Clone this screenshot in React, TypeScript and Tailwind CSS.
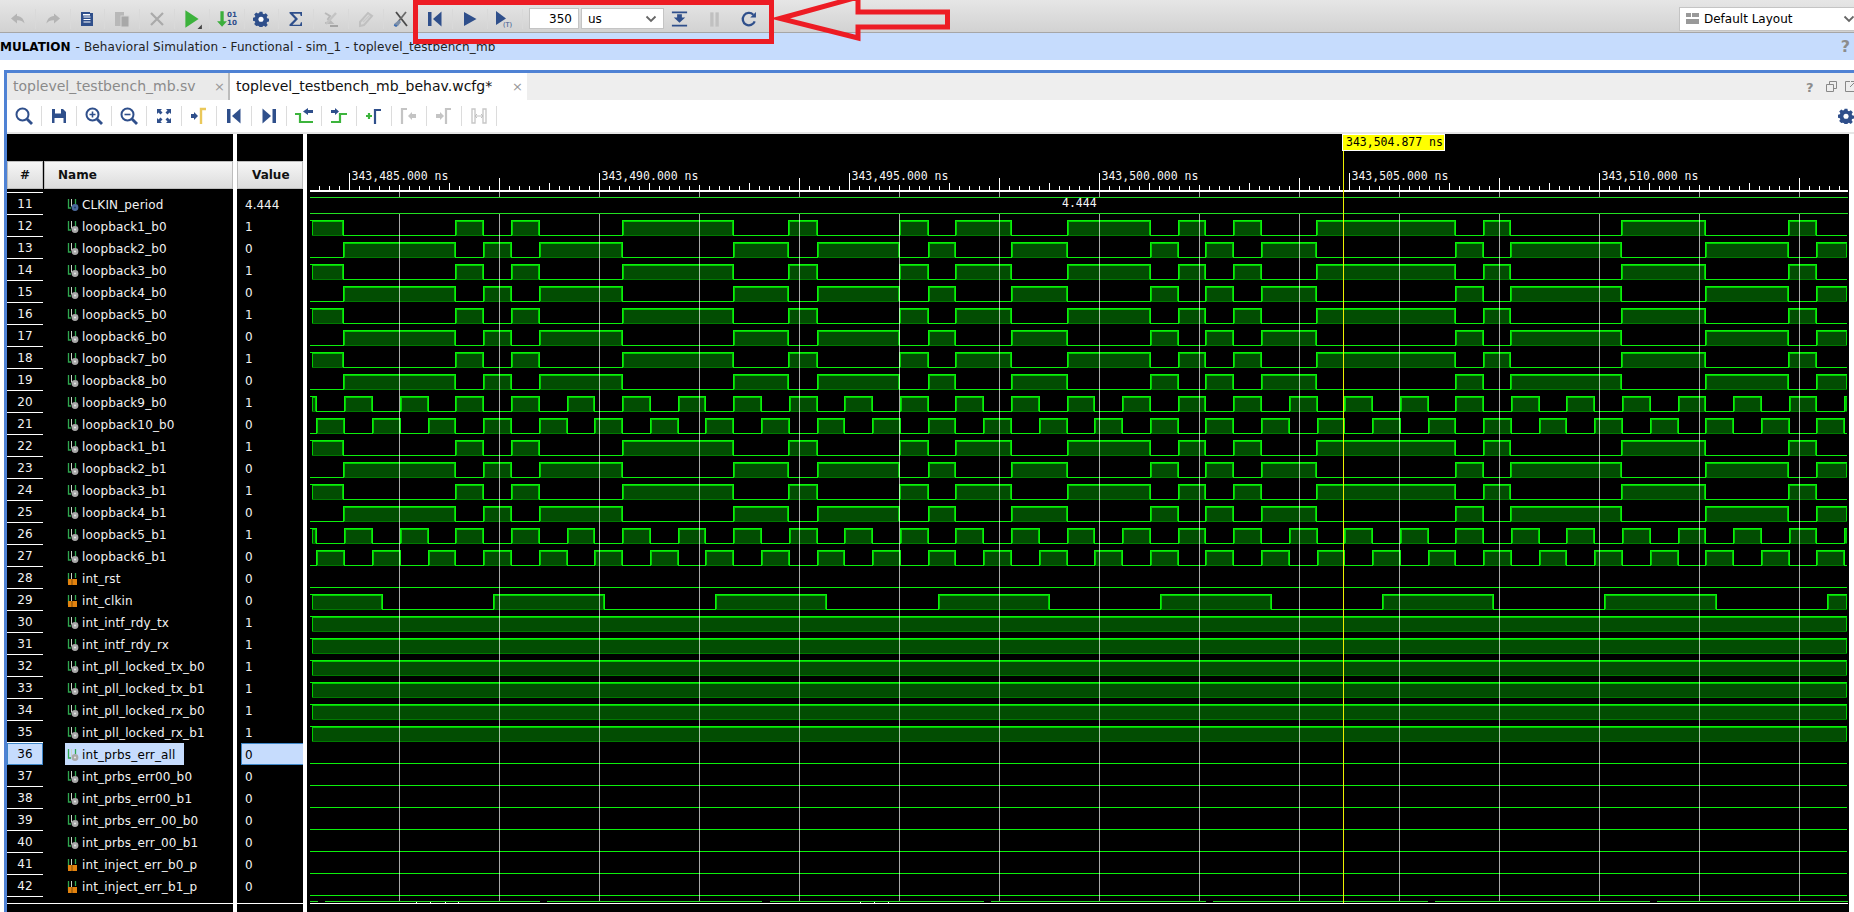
import React from "react";

const BLUE = "#2f4f8b";
const GREY = "#b4b4b4";

// rows of the wave window, in the order shown
type Kind = "gray" | "blue" | "orange";
interface Row {
  n: number;
  name: string;
  value: string;
  kind: Kind;
}

const row = (n: number, name: string, value: string, kind: Kind = "gray"): Row => ({ n, name, value, kind });

const rows: Row[] = [
  row(11, "CLKIN_period", "4.444", "blue"),
  row(12, "loopback1_b0", "1"),
  row(13, "loopback2_b0", "0"),
  row(14, "loopback3_b0", "1"),
  row(15, "loopback4_b0", "0"),
  row(16, "loopback5_b0", "1"),
  row(17, "loopback6_b0", "0"),
  row(18, "loopback7_b0", "1"),
  row(19, "loopback8_b0", "0"),
  row(20, "loopback9_b0", "1"),
  row(21, "loopback10_b0", "0"),
  row(22, "loopback1_b1", "1"),
  row(23, "loopback2_b1", "0"),
  row(24, "loopback3_b1", "1"),
  row(25, "loopback4_b1", "0"),
  row(26, "loopback5_b1", "1"),
  row(27, "loopback6_b1", "0"),
  row(28, "int_rst", "0", "orange"),
  row(29, "int_clkin", "0", "orange"),
  row(30, "int_intf_rdy_tx", "1"),
  row(31, "int_intf_rdy_rx", "1"),
  row(32, "int_pll_locked_tx_b0", "1"),
  row(33, "int_pll_locked_tx_b1", "1"),
  row(34, "int_pll_locked_rx_b0", "1"),
  row(35, "int_pll_locked_rx_b1", "1"),
  row(36, "int_prbs_err_all", "0"),
  row(37, "int_prbs_err00_b0", "0"),
  row(38, "int_prbs_err00_b1", "0"),
  row(39, "int_prbs_err_00_b0", "0"),
  row(40, "int_prbs_err_00_b1", "0"),
  row(41, "int_inject_err_b0_p", "0", "orange"),
  row(42, "int_inject_err_b1_p", "0", "orange"),
];

const X0 = 310;
const X1 = 1847;

const slow: number[][] = [
  [311, 343], [455, 483], [511, 539], [622, 733], [788, 817], [899, 928], [955, 1011], [1067, 1150],
  [1178, 1205], [1233, 1261], [1316, 1455], [1483, 1510], [1621, 1705], [1788, 1816],
];

const fastEdges = [
  316, 344, 372, 400, 428, 455, 483, 511, 539, 567, 594, 622, 650, 678, 705, 733, 761, 789, 817, 844, 872,
  900, 928, 955, 983, 1011, 1039, 1067, 1094, 1122, 1150, 1178, 1205, 1233, 1261, 1289, 1317, 1344, 1372,
  1400, 1428, 1455, 1483, 1511, 1539, 1566, 1594, 1622, 1650, 1678, 1705, 1733, 1761, 1789, 1816, 1844,
];

const fast: number[][] = [[311, 316]];
for (let i = 1; i < fastEdges.length; i += 2) {
  fast.push([fastEdges[i], fastEdges[i + 1] ?? X1]);
}

const invert = (highs: number[][]) => {
  const out: number[][] = [];
  let from = highs[0][0] <= 311 ? highs[0][1] : 311;
  for (const h of highs.slice(highs[0][0] <= 311 ? 1 : 0)) {
    out.push([from, h[0]]);
    from = h[1];
  }
  if (from < X1) out.push([from, X1]);
  return out;
};

const clkin = [
  [311, 382], [493, 604], [715, 826], [938, 1049], [1160, 1271], [1382, 1493], [1604, 1716], [1827, X1],
];

const waves: Record<number, number[][]> = {
  12: slow, 13: invert(slow), 14: slow, 15: invert(slow), 16: slow, 17: invert(slow), 18: slow, 19: invert(slow),
  20: fast, 21: invert(fast),
  22: slow, 23: invert(slow), 24: slow, 25: invert(slow),
  26: fast, 27: invert(fast),
  29: clkin,
  30: [[311, X1]], 31: [[311, X1]], 32: [[311, X1]], 33: [[311, X1]], 34: [[311, X1]], 35: [[311, X1]],
};

function Wave({ top, highs }: { top: number; highs: number[][] }) {
  const yH = top + 6.5;
  const yL = top + 21.5;
  let d = `M${X0} ${highs[0]?.[0] === 311 ? yH : yL}`;
  highs.forEach(([a, b]) => {
    if (a !== 311) d += `H${a + 0.5}V${yH}`;
    else d += `H${a + 0.5}`;
    if (b < X1) d += `H${b + 0.5}V${yL}`;
    else d += `H${X1}`;
  });
  if (!highs.length || highs[highs.length - 1][1] < X1) d += `H${X1}`;
  return (
    <g shapeRendering="crispEdges">
      {highs.map(([a, b]) => (
        <g key={a}>
          <rect x={a + 1.5} y={yH + 1} width={b - a - 2} height={14} fill="#024d02" stroke="#00cc00" strokeWidth={1} />
          <path d={`M${a + 1} ${yL}H${b}`} stroke="#007a00" />
        </g>
      ))}
      <path d={d} fill="none" stroke="#0cf00c" strokeWidth={1} />
    </g>
  );
}

const LABELS = [
  [349.5, "343,485.000 ns"],
  [599.5, "343,490.000 ns"],
  [849.5, "343,495.000 ns"],
  [1099.5, "343,500.000 ns"],
  [1349.5, "343,505.000 ns"],
  [1599.5, "343,510.000 ns"],
] as const;

const TALL = [499.5, 799.5, 999.5, 1299.5, 1499.5, 1799.5];

function WaveView() {
  const ticks: number[] = [];
  for (let x = 319.5; x < 1845; x += 10) ticks.push(x);
  const grid: number[] = [];
  for (let x = 399.5; x < 1845; x += 100) grid.push(x);
  const mono = { fontFamily: "'DejaVu Sans Mono', monospace", fontSize: 11.5 };

  return (
    <svg viewBox="307 134 1542 778" className="block w-[1542px] h-[778px]">
      {LABELS.map(([x, t]) => (
        <text key={x} x={x + 2} y={180} fill="#f4f4f4" style={mono}>
          {t}
        </text>
      ))}
      <g shapeRendering="crispEdges" stroke="#ffffff">
        {ticks.map((x) => {
          const isLabel = (x - 349.5) % 250 === 0;
          const h = isLabel ? 17 : TALL.includes(x) ? 12 : (x - 349.5) % 100 === 0 ? 7 : (x - 349.5) % 50 === 0 ? 5 : 4;
          return <path key={x} d={`M${x} ${190 - h}V190`} />;
        })}
        <path d={`M310 190.5H1848M310 191.5H1848`} />
      </g>
      {rows
        .filter((r) => r.n >= 12)
        .map((r) => (
          <Wave key={r.n} top={192 + 22 * (r.n - 11)} highs={waves[r.n] ?? []} />
        ))}
      <g shapeRendering="crispEdges" stroke="#ffffff" strokeOpacity={0.66}>
        {grid.map((x) => (
          <path key={x} d={`M${x} 192V197M${x} 214V901`} />
        ))}
      </g>
      <g shapeRendering="crispEdges" stroke="#22e022">
        <path d="M310 197.5H1848M310 213.5H1848" />
        <path d="M310 901.5H318M325 901.5H540M547 901.5H762M770 901.5H984M991 901.5H1206M1213 901.5H1428M1435 901.5H1650M1657 901.5H1848" />
      </g>
      <text x={1062} y={207} fill="#f4f4f4" style={mono}>
        4.444
      </text>
      <g shapeRendering="crispEdges">
        <path d="M310 903.5H1848" stroke="#ffffff" />
        <path d="M416.5 902V903M430.5 902V903M445.5 902V903M458.5 902V903M860.5 902V903M874.5 902V903M888.5 902V903" stroke="#ffffff" />
        <path d="M1343.5 150V903" stroke="#eeee00" />
      </g>
    </svg>
  );
}

// signal type glyph in front of each name
function SignalIcon({ kind }: { kind: Kind }) {
  return (
    <svg width="12" height="14" viewBox="0 0 12 14" className="shrink-0">
      <path d="M1.500 1V10H4M8.500 1V6" fill="none" stroke="#2fa84f" strokeWidth="1.300" />
      <path d="M4.500 1V8.500" stroke="#c8d8c8" strokeWidth="1" />
      {kind === "orange" ? (
        <>
          <rect x="1" y="7" width="9" height="6" fill="#e2820f" />
          <path d="M5 7V13" stroke="#7a4a08" strokeWidth="1" />
        </>
      ) : (
        <>
          <circle cx="8" cy="9.500" r="3.400" fill={kind === "blue" ? "#4c6a9c" : "#a9a9a9"} />
          <circle cx="8" cy="9.500" r="1.100" fill={kind === "blue" ? "#24406f" : "#e4e4e4"} />
        </>
      )}
    </svg>
  );
}

function Header({ children, className }: { children: React.ReactNode; className: string }) {
  return (
    <div className={`h-[28px] flex items-center bg-gradient-to-b from-[#f6f6f6] to-[#dcdcdc] border border-[#bdbdbd] font-bold text-[#111] ${className}`}>
      {children}
    </div>
  );
}

// toolbar glyphs ---------------------------------------------------------
const Svg = ({ children, s = 20 }: { children: React.ReactNode; s?: number }) => (
  <svg width={s} height={s} viewBox="0 0 20 20">
    {children}
  </svg>
);

const Undo = () => (
  <Svg>
    <path d="M9 4.500 3 9.500l6 5v-3.200c3-.2 5.500.5 7.500 3.200-.4-4.200-3-7.200-7.500-7.600z" fill={GREY} />
  </Svg>
);
const Redo = () => (
  <Svg>
    <path d="M11 4.500 17 9.500l-6 5v-3.200c-3-.2-5.500.5-7.500 3.200.4-4.200 3-7.200 7.500-7.600z" fill={GREY} />
  </Svg>
);
const Doc = () => (
  <Svg>
    <path d="M4 3h9v1h3v13H4z" fill={BLUE} />
    <path d="M6.500 8h7M6.500 10.500h7M6.500 13h7" stroke="#fff" strokeWidth="1" />
    <rect x="6" y="5" width="7" height="1.500" fill="#fff" />
  </Svg>
);
const Copy = () => (
  <Svg>
    <rect x="3" y="3" width="9" height="14" fill="#b8b8b8" />
    <rect x="9" y="7" width="8" height="11" fill="#a8a8a8" stroke="#d4d4d4" />
  </Svg>
);
const Cross = () => (
  <Svg>
    <path d="M4 4 16 16M16 4 4 16" stroke="#aaa" strokeWidth="2.200" />
  </Svg>
);
const GreenPlay = () => (
  <Svg s={22}>
    <path d="M4 2 16 10 4 18z" fill="#3cb23c" />
    <path d="M19 15v4h-4z" fill="#444" />
  </Svg>
);
const Bits = () => (
  <Svg s={22}>
    <path d="M4 3h3v9h3l-4.500 5L1 12h3z" fill="#3cae3c" />
    <text x="10" y="8" fontSize="6.500" fontWeight="700" fill={BLUE} fontFamily="'DejaVu Sans', sans-serif">
      01
    </text>
    <text x="10" y="15" fontSize="6.500" fontWeight="700" fill={BLUE} fontFamily="'DejaVu Sans', sans-serif">
      10
    </text>
  </Svg>
);
const Gear = ({ color = BLUE, s = 16 }: { color?: string; s?: number }) => (
  <svg width={s} height={s} viewBox="0 0 20 20">
    <path
      d="M8.200 1h3.600l.5 2.500 1.500.7 2.200-1.400 2.500 2.500-1.400 2.200.6 1.500 2.300.6v3.600l-2.400.5-.6 1.500 1.400 2.200-2.500 2.500-2.200-1.400-1.500.6-.5 2.400H8.200l-.5-2.400-1.500-.6L4 18.900l-2.500-2.500 1.400-2.200-.6-1.500L0 12.100V8.500l2.300-.6.600-1.500L1.500 4.300 4 1.800l2.200 1.400 1.500-.7z"
      fill={color}
    />
    <circle cx="10" cy="10.300" r="3.200" fill="#fff" />
  </svg>
);
const Sigma = () => (
  <Svg>
    <path d="M3.500 3h12.500v4h-1.300l-.6-2.300H7l5 5.300-5.500 5.700h7.500l.9-2.500H16L16 17H3.500v-1.400L9 10 3.500 4.300z" fill={BLUE} />
  </Svg>
);
const GreySigma = () => (
  <Svg>
    <path d="M4 4l5 3-2 3 4 4H4" fill="none" stroke="#b8b8b8" strokeWidth="2" />
    <path d="M5 15 15 4" stroke="#c4c4c4" strokeWidth="2.400" />
    <path d="M9 17h8" stroke="#a4a4a4" strokeWidth="2" />
  </Svg>
);
const GreyPen = () => (
  <Svg>
    <path d="M4 13 12 4l4 3-8 9-4 1z" fill="none" stroke="#c0c0c0" strokeWidth="2" />
    <path d="M7 13l7-7" stroke="#c8c8c8" strokeWidth="1.500" />
  </Svg>
);
const CutProbe = () => (
  <Svg>
    <path d="M5 3 16 17" stroke="#4a4a4a" strokeWidth="1.800" />
    <path d="M15 3 7 13" stroke="#6a6a6a" strokeWidth="1.800" />
    <path d="M8 11 3 15l1 3 3-1 3-4z" fill="#7d8fa8" />
    <path d="M3 16l3 1" stroke="#3f6fb5" strokeWidth="1.500" />
  </Svg>
);
const SkipBack = ({ s = 20, color = BLUE }: { s?: number; color?: string }) => (
  <Svg s={s}>
    <rect x="3" y="3" width="3.500" height="14" fill={color} />
    <path d="M16.500 2.500V17.500L8 10z" fill={color} />
  </Svg>
);
const SkipNext = () => (
  <Svg>
    <rect x="13.500" y="3" width="3.500" height="14" fill={BLUE} />
    <path d="M3.500 2.500V17.500L12 10z" fill={BLUE} />
  </Svg>
);
const Play = () => (
  <Svg>
    <path d="M4 3 16.500 10 4 17z" fill={BLUE} />
  </Svg>
);
const PlayT = () => (
  <svg width="20" height="20" viewBox="0 0 20 20">
    <path d="M1 2 11 9.500 1 16z" fill={BLUE} />
    <text x="8" y="18" fontSize="6.500" fill={BLUE} fontFamily="'DejaVu Sans', sans-serif">
      (T)
    </text>
  </svg>
);
const StepIn = () => (
  <Svg>
    <path d="M2 3h16M2 17h16" stroke={BLUE} strokeWidth="1.800" />
    <path d="M7.500 5h5v3.500H16L10 14 4 8.500h3.500z" fill={BLUE} />
  </Svg>
);
const Pause = () => (
  <Svg>
    <rect x="5.500" y="3" width="3.500" height="15" fill="#c0c0c0" />
    <rect x="11" y="3" width="3.500" height="15" fill="#c0c0c0" />
  </Svg>
);
const Reload = () => (
  <Svg>
    <path d="M15.500 12.500a6.500 6.500 0 1 1-1.500-7" fill="none" stroke={BLUE} strokeWidth="2.400" />
    <path d="M16.800 2.500v6h-6z" fill={BLUE} />
  </Svg>
);
const Search = () => (
  <Svg>
    <circle cx="8.500" cy="8.500" r="6" fill="none" stroke={BLUE} strokeWidth="2" />
    <path d="M13 13l5 5" stroke={BLUE} strokeWidth="2.800" />
  </Svg>
);
const Save = () => (
  <Svg>
    <path d="M3 3h11l3 3v11H3z" fill={BLUE} />
    <rect x="6" y="3" width="6" height="4.500" fill="#fff" />
    <rect x="5.500" y="12" width="9" height="5" fill="#fff" />
  </Svg>
);
const ZoomGlyph = ({ plus }: { plus: boolean }) => (
  <Svg>
    <circle cx="8.500" cy="8.500" r="6" fill="none" stroke={BLUE} strokeWidth="2" />
    <path d={plus ? "M5.500 8.500h6M8.500 5.500v6" : "M5.500 8.500h6"} stroke={BLUE} strokeWidth="1.600" />
    <path d="M13 13l5 5" stroke={BLUE} strokeWidth="2.800" />
  </Svg>
);
const Fit = () => (
  <Svg>
    <path d="M3 3h5L6.500 4.500 8.500 6.500 6.500 8.500 4.500 6.500 3 8zM17 3v5l-1.500-1.500-2 2-2-2 2-2L12 3zM3 17v-5l1.500 1.500 2-2 2 2-2 2L8 17zM17 17h-5l1.500-1.500-2-2 2-2 2 2L17 12z" fill={BLUE} />
  </Svg>
);
const GotoCursor = () => (
  <Svg>
    <path d="M2 8h3V6l4 4-4 4v-2H2z" fill={BLUE} />
    <path d="M12 18V3h5" fill="none" stroke="#eac85a" strokeWidth="2.400" />
  </Svg>
);
const Edge = ({ flip }: { flip?: boolean }) => (
  <Svg>
    <path d={flip ? "M2 16h9V8h7" : "M1 8h5v8h13"} fill="none" stroke="#3cb43c" strokeWidth="2.200" />
    <path d={flip ? "M2 4h4V2l4 3.500L6 9V7H2z" : "M19 4h-5V2L9 5.500 14 9V7h5z"} fill={BLUE} />
  </Svg>
);
const AddMarker = () => (
  <Svg>
    <path d="M2 10h6M5 7v6" stroke="#3cb43c" strokeWidth="2.200" />
    <path d="M11 18V4h6" fill="none" stroke={BLUE} strokeWidth="2.200" />
  </Svg>
);
const MarkPrev = () => (
  <Svg>
    <path d="M3 18V3h5" fill="none" stroke="#c4c4c4" strokeWidth="2.200" />
    <path d="M17 8h-4V6l-4 4 4 4v-2h4z" fill="#c4c4c4" />
  </Svg>
);
const MarkNext = () => (
  <Svg>
    <path d="M2 8h4V6l4 4-4 4v-2H2z" fill="#c4c4c4" />
    <path d="M12 18V3h5" fill="none" stroke="#c4c4c4" strokeWidth="2.200" />
  </Svg>
);
const Span = () => (
  <Svg>
    <path d="M3 3h3v14H3zM14 3h3v14h-3z" fill="none" stroke="#c8c8c8" strokeWidth="1.400" />
    <path d="M6 10h8M6 10l2-2M6 10l2 2M14 10l-2-2M14 10l-2 2" stroke="#c0c0c0" strokeWidth="1" fill="none" />
  </Svg>
);
const Chevron = () => (
  <svg width="12" height="8" viewBox="0 0 12 8">
    <path d="M1.500 1.500 6 6l4.500-4.500" fill="none" stroke="#666" strokeWidth="1.800" />
  </svg>
);
const Help = ({ cls }: { cls: string }) => <span className={`font-bold text-[#8c8c8c] ${cls}`}>?</span>;

const topIcons = [
  <Undo />, <Redo />, <Doc />, <Copy />, <Cross />, <GreenPlay />, <Bits />, <Gear />, <Sigma />, <GreySigma />,
  <GreyPen />, <CutProbe />, <SkipBack />, <Play />, <PlayT />,
];

const waveIcons = [
  <Search />, <Save />, <ZoomGlyph plus />, <ZoomGlyph plus={false} />, <Fit />, <GotoCursor />, <SkipBack s={20} />,
  <SkipNext />, <Edge />, <Edge flip />, <AddMarker />, <MarkPrev />, <MarkNext />, <Span />,
];

export default function App() {
  return (
    <div className="relative w-[1854px] h-[912px] overflow-hidden bg-white font-['DejaVu_Sans',sans-serif] text-[12px] text-black">
      {/* main toolbar */}
      <div className="h-[33px] flex items-center pl-px pt-[5px] bg-gradient-to-b from-[#e6e6e6] to-[#d2d2d2] border-b border-[#a6a6a6]">
        {topIcons.map((icon, i) => (
          <div key={i} className="w-[34.8px] h-[20px] flex items-center justify-center border-r border-[#d9d9d9]">
            {icon}
          </div>
        ))}
        <div className="ml-[6px] w-[50px] h-[21px] bg-white border border-[#c4c4c4] flex items-center justify-end pr-[6px]">
          350
        </div>
        <div className="ml-[2px] w-[83px] h-[21px] bg-white border border-[#c4c4c4] flex items-center justify-between pl-[6px] pr-[6px]">
          us
          <Chevron />
        </div>
        <div className="ml-[6px] w-[19px] flex justify-center">
          <StepIn />
        </div>
        <div className="ml-[16px] w-[19px] flex justify-center">
          <Pause />
        </div>
        <div className="ml-[16px] w-[19px] flex justify-center">
          <Reload />
        </div>
        <div className="ml-auto w-[177px] h-[24px] bg-white border border-[#c4c4c4] flex items-center pl-[6px] -mr-[2px]">
          <svg width="13" height="11" viewBox="0 0 13 11" className="mr-[5px]">
            <rect x="0" y="0" width="5" height="4" fill="#999" />
            <rect x="6" y="0" width="7" height="4" fill="#999" />
            <rect x="0" y="6" width="13" height="5" fill="#999" />
          </svg>
          Default Layout
          <span className="ml-auto">
            <Chevron />
          </span>
        </div>
      </div>

      {/* flow navigator strip */}
      <div className="h-[27px] bg-[#c6dcfd] flex items-center text-[#222] relative">
        <span className="font-bold text-black">MULATION</span>
        <span className="ml-[5px] tracking-[0.12px]">- Behavioral Simulation - Functional - sim_1 - toplevel_testbench_mb</span>
        <Help cls="absolute right-[4px] text-[16px]" />
      </div>

      <div className="h-[10px]" />

      {/* wave window */}
      <div className="ml-[4px] h-[842px] border-t-[3px] border-l-[3px] border-[#4f82d4] flex flex-col">
        <div className="h-[27px] bg-[#eeeeee] flex items-stretch shrink-0 relative">
          <div className="w-[223px] bg-[#eaeaea] border-r-2 border-[#bcbcbc] flex items-center pl-[6px] text-[14px] text-[#8a8a8a] font-medium">
            toplevel_testbench_mb.sv
            <span className="ml-auto mr-[3px] text-[#999] text-[13px]">×</span>
          </div>
          <div className="w-[297px] bg-white flex items-center pl-[6px] text-[14px] text-[#111]">
            toplevel_testbench_mb_behav.wcfg*
            <span className="ml-auto mr-[4px] text-[#999] text-[13px]">×</span>
          </div>
          <Help cls="absolute left-[1799px] top-[5px] text-[13px]" />
          <svg width="11" height="11" viewBox="0 0 11 11" className="absolute left-[1819px] top-[8px]">
            <path d="M3.500 3.500V.5h7v7h-3M.5 3.500h7v7h-7z" fill="none" stroke="#888" />
          </svg>
          <svg width="11" height="11" viewBox="0 0 11 11" className="absolute left-[1838px] top-[8px]">
            <path d="M5 .5H.5v10h10V6M6 .5h4.500V5M10 1 5 6" fill="none" stroke="#888" />
          </svg>
        </div>
        <div className="h-[32px] bg-white flex items-center shrink-0 relative">
          {waveIcons.map((icon, i) => (
            <div key={i} className="w-[35px] h-[20px] flex items-center justify-center border-r border-[#dcdcdc]">
              {icon}
            </div>
          ))}
          <div className="absolute right-[0px] top-[8px]">
            <Gear />
          </div>
        </div>
        <div className="h-[2px] bg-[#e6e6e6] shrink-0" />

        <div className="flex-1 flex bg-white">
          {/* names */}
          <div className="w-[226px] h-full bg-black pt-[27px] relative">
            <div className="flex">
              <Header className="w-[36px] justify-center">#</Header>
              <Header className="flex-1 ml-px pl-[13px]">Name</Header>
            </div>
            <div className="mt-[3px] w-[36px] border-t border-white" />
            {rows.map((r) => {
              const sel = r.n === 36;
              return (
                <div key={r.n} className="h-[22px] flex text-[#f2f2f2]">
                  <div className={`w-[36px] shrink-0 border-b border-white flex items-center justify-center ${sel ? "bg-[#c6dcfd] text-black outline outline-1 -outline-offset-1 outline-[#3f87c8]" : ""}`}>
                    {r.n}
                  </div>
                  <div className={`ml-[22px] flex items-center gap-[3px] pl-[2px] pt-px tracking-[0.15px] ${sel ? "w-[119px] bg-[#c6dcfd] text-black" : ""}`}>
                    <SignalIcon kind={r.kind} />
                    {r.name}
                  </div>
                </div>
              );
            })}
            <div className="mt-[6px] border-t border-white" />
          </div>

          <div className="w-[4px]" />

          {/* values */}
          <div className="w-[66px] h-full bg-black pt-[27px]">
            <Header className="pl-[14px]">Value</Header>
            <div className="h-[4px]" />
            {rows.map((r) => (
              <div
                key={r.n}
                className={
                  r.n === 36
                    ? "h-[22px] flex items-center pt-px ml-[4px] pl-[3px] bg-[#c6dcfd] text-black border border-r-0 border-[#3f87c8]"
                    : "h-[22px] flex items-center pt-px pl-[8px] text-[#f2f2f2]"
                }
              >
                {r.value}
              </div>
            ))}
            <div className="mt-[6px] border-t border-white" />
          </div>

          <div className="w-[4px]" />

          {/* waves */}
          <div className="w-[1542px] h-full bg-black relative">
            <WaveView />
            <div className="absolute left-[1035px] top-0 w-[103px] h-[17px] bg-[#ffff00] border border-white flex items-center pl-[3px] font-['DejaVu_Sans_Mono',monospace] text-[11.5px] whitespace-nowrap">
              343,504.877 ns
            </div>
          </div>
        </div>
      </div>

      {/* red callout drawn over the screenshot */}
      <div className="absolute left-[413px] top-0 w-[361px] h-[44px] border-[5px] border-[#ed1c24] pointer-events-none" />
      <svg width="200" height="44" viewBox="760 0 200 44" className="absolute left-[760px] top-0 pointer-events-none">
        <path d="M780 18.500 858 -3V12H947.500V27H858V38z" fill="none" stroke="#ed1c24" strokeWidth="5" strokeLinejoin="miter" />
      </svg>
    </div>
  );
}
